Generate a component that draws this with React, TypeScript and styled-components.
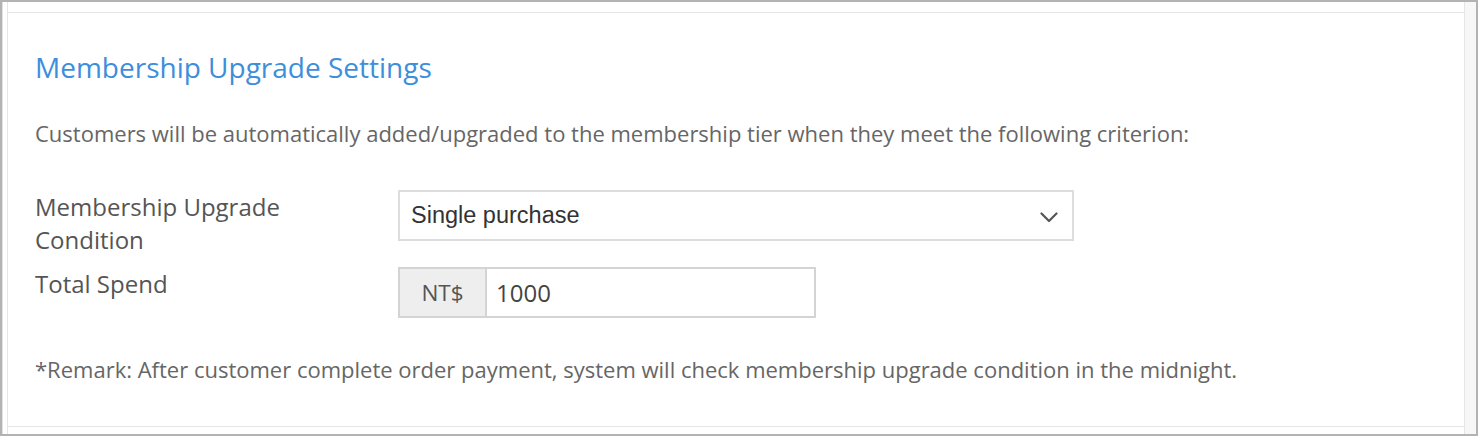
import React from "react";
import styled, { createGlobalStyle } from "styled-components";

const GlobalStyle = createGlobalStyle`
  html, body {
    margin: 0;
    padding: 0;
    background: #ffffff;
  }
  * {
    box-sizing: border-box;
  }
`;

const Frame = styled.div`
  width: 1478px;
  height: 436px;
  border: 2px solid #b3b3b3;
  background: #ffffff;
  display: flex;
  overflow: hidden;
  font-family: "Open Sans", "Liberation Sans", sans-serif;
`;

const Gutter = styled.div`
  width: 5px;
  flex-shrink: 0;
  border-left: 1px solid #e2e2e2;
`;

const Column = styled.div`
  flex: 1;
  border-left: 1px solid #e6e6e6;
  border-right: 1px solid #e6e6e6;
  padding-top: 10px;
`;

const ScrollTrack = styled.div`
  width: 11px;
  flex-shrink: 0;
  background: #f7f7f7;
`;

const Panel = styled.section`
  height: 415px;
  border-top: 1px solid #e5e5e5;
  border-bottom: 1px solid #e5e5e5;
  padding: 35px 27px 0;
`;

const Title = styled.h2`
  margin: 0;
  font-size: 28px;
  font-weight: 400;
  line-height: 38px;
  color: #3d8edb;
`;

const Text = styled.p<{ $top?: number }>`
  margin: ${(p) => p.$top ?? 0}px 0 0;
  font-size: 22px;
  line-height: 30px;
  color: #666666;
`;

const Form = styled.div`
  margin-top: 42px;
  display: grid;
  grid-template-columns: 363px auto;
  row-gap: 11px;
  align-items: start;
`;

const Label = styled.label`
  max-width: 300px;
  font-size: 24px;
  line-height: 33px;
  color: #555555;
`;

const Select = styled.div`
  width: 676px;
  height: 51px;
  border: 2px solid #dddddd;
  display: flex;
  align-items: center;
  justify-content: space-between;
  padding: 0 14px 0 11px;
  font-family: "Liberation Sans", Arial, sans-serif;
  font-size: 23.5px;
  color: #333333;
`;

const Chevron = styled.svg`
  width: 18px;
  height: 11px;
  margin-top: 4px;
`;

const InputGroup = styled.div`
  width: 418px;
  height: 51px;
  border: 2px solid #d4d4d4;
  display: flex;
`;

const Addon = styled.span`
  width: 87px;
  background: #eeeeee;
  border-right: 2px solid #d4d4d4;
  display: flex;
  align-items: center;
  justify-content: center;
  font-size: 22.5px;
  color: #555555;
`;

const Input = styled.input`
  flex: 1;
  min-width: 0;
  border: none;
  outline: none;
  padding: 0 9px;
  font-family: "Open Sans", "Liberation Sans", sans-serif;
  font-size: 24px;
  color: #444444;
  background: transparent;
`;

const App: React.FC = () => {
  return (
    <>
      <GlobalStyle />
      <Frame>
        <Gutter />
        <Column>
          <Panel>
            <Title>Membership Upgrade Settings</Title>
            <Text $top={32}>
              Customers will be automatically added/upgraded to the membership
              tier when they meet the following criterion:
            </Text>
            <Form>
              <Label>Membership Upgrade Condition</Label>
              <Select>
                <span>Single purchase</span>
                <Chevron viewBox="0 0 18 11">
                  <polyline
                    points="1.5,1.5 9,9 16.5,1.5"
                    fill="none"
                    stroke="#555"
                    strokeWidth="2.2"
                    strokeLinecap="round"
                    strokeLinejoin="round"
                  />
                </Chevron>
              </Select>
              <Label>Total Spend</Label>
              <InputGroup>
                <Addon>NT$</Addon>
                <Input defaultValue="1000" />
              </InputGroup>
            </Form>
            <Text $top={36}>
              *Remark: After customer complete order payment, system will check
              membership upgrade condition in the midnight.
            </Text>
          </Panel>
        </Column>
        <ScrollTrack />
      </Frame>
    </>
  );
};

export default App;
